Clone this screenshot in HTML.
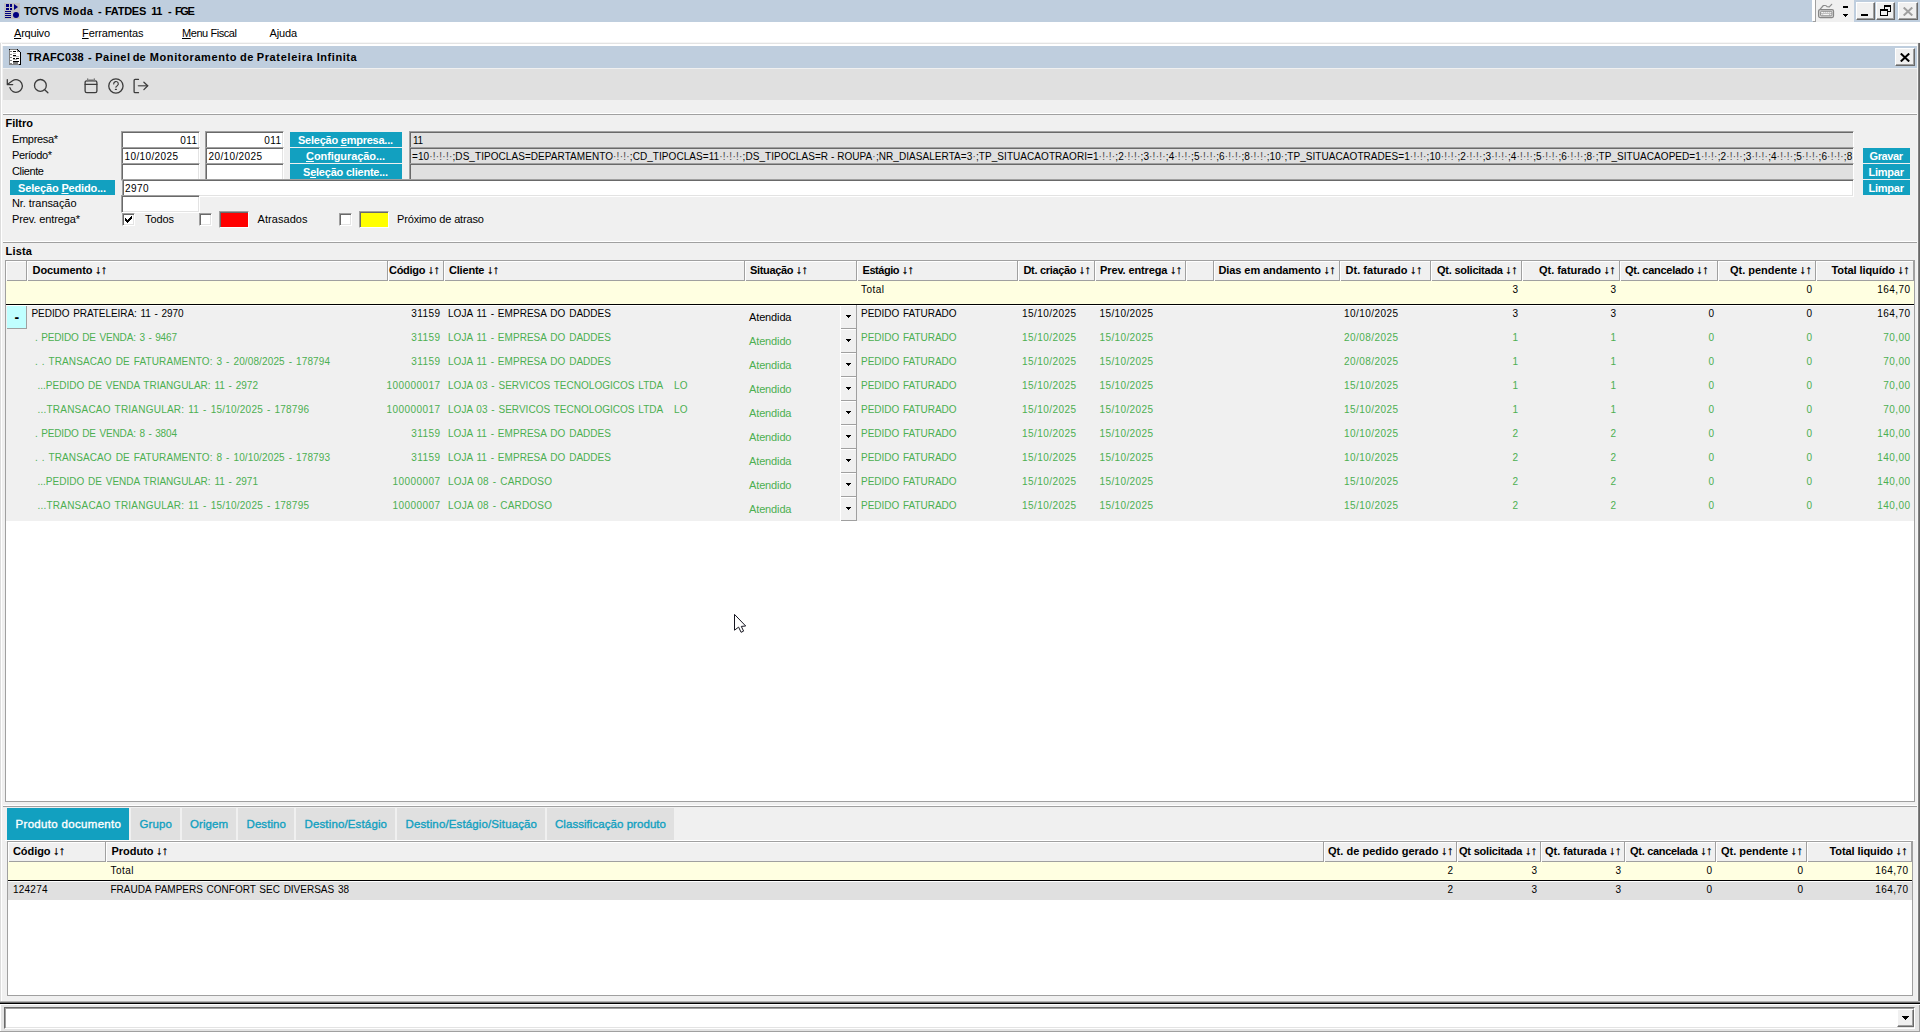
<!DOCTYPE html><html lang="pt-BR"><head><meta charset="utf-8"><title>TOTVS Moda - FATDES 11 - FGE</title><style>html,body{margin:0;padding:0}body{width:1920px;height:1032px;position:relative;overflow:hidden;background:#f0f0f0}
body>div,body>svg{position:absolute}
.t{white-space:nowrap;font:11px/13px 'Liberation Sans',sans-serif;color:#000}
.t.b{font-weight:bold}
.t.tab{font-size:11.5px;line-height:14px;-webkit-text-stroke:0.35px currentColor}
.t.d{font-size:10px}
.ar{font:12px/13px 'Liberation Sans',sans-serif;letter-spacing:-0.2px;margin-left:2.6px;font-weight:normal;-webkit-text-stroke:0.3px currentColor}
.sp{color:#4a4a4a}
u{text-decoration:underline}
</style></head><body><div style="left:0px;top:0px;width:1920px;height:22px;background:#bfcede;"></div>
<svg style="left:4px;top:3px" width="16" height="16" viewBox="0 0 16 16" shape-rendering="crispEdges"><rect width="16" height="16" fill="#c0c0c0"/><g fill="#000080"><rect x="2" y="1" width="3" height="3"/><rect x="6" y="1" width="2" height="3"/><rect x="2" y="5" width="3" height="2"/><rect x="6" y="5" width="2" height="2"/><rect x="1" y="8" width="6" height="1"/><rect x="1" y="10" width="6" height="1"/><rect x="1" y="12" width="6" height="1"/><rect x="1" y="14" width="6" height="1"/><path d="M10 1 L14 4 L10 7 Z" shape-rendering="auto"/><circle cx="12" cy="12" r="3" shape-rendering="auto"/></g></svg>
<div style="left:1816px;top:0px;width:38px;height:22px;background:#f0f0f0;"></div>
<div style="left:1812px;top:0px;width:3px;height:21px;background:#fff;"></div>
<div style="left:1815px;top:0px;width:1px;height:22px;background:#a0a0a0;"></div>
<div style="left:1813px;top:21px;width:2px;height:1px;background:#a0a0a0;"></div>
<svg style="left:1817px;top:3px" width="18" height="16" viewBox="0 0 18 16" fill="none"><rect x="1.6" y="6.6" width="14.9" height="7.9" rx="1.5" stroke="#868686" stroke-width="1.25" fill="#dcdcdc"/><rect x="3.6" y="8.3" width="11.2" height="4.6" rx="0.8" stroke="#909090" fill="#c0c0c0"/><g fill="#f6f6f6"><rect x="4.3" y="8.9" width="2" height="1.1"/><rect x="7.2" y="8.9" width="1.1" height="1.1"/><rect x="9.2" y="8.9" width="1.1" height="1.1"/><rect x="11.2" y="8.9" width="1.1" height="1.1"/><rect x="13.2" y="8.9" width="1.1" height="1.1"/><rect x="4.3" y="11" width="1.1" height="1.1"/><rect x="6.2" y="11" width="5.8" height="1.1"/><rect x="13.2" y="11" width="1.1" height="1.1"/></g><path d="M3.2 6.2L6.4 2.5H8.2Q9.6 2.7 10.1 3.7L12.3 3.9L14.7 1.3" stroke="#8c8c8c" stroke-width="1.2" stroke-linejoin="round" stroke-linecap="round"/></svg>
<div style="left:1843px;top:6px;width:5px;height:2px;background:#000;"></div>
<svg style="left:1843px;top:14px" width="5" height="3" viewBox="0 0 5 3" shape-rendering="crispEdges"><path d="M0 0h5v1h-1v1h-1v1h-1v-1h-1v-1h-1z" fill="#000"/></svg>
<div style="left:1856px;top:2px;width:19px;height:18px;background:#f0f0f0;box-sizing:border-box;border-top:1px solid #fff;border-left:1px solid #fff;border-right:1px solid #696969;border-bottom:1px solid #696969;box-shadow:inset -1px -1px 0 #a0a0a0;"></div>
<div style="left:1861px;top:14px;width:7px;height:2px;background:#000;"></div>
<div style="left:1876px;top:2px;width:19px;height:18px;background:#f0f0f0;box-sizing:border-box;border-top:1px solid #fff;border-left:1px solid #fff;border-right:1px solid #696969;border-bottom:1px solid #696969;box-shadow:inset -1px -1px 0 #a0a0a0;"></div>
<svg style="left:1880px;top:5px" width="12" height="11" viewBox="0 0 12 11" shape-rendering="crispEdges" fill="none" stroke="#000"><path d="M4.5 4V1.5h6v4.5H8" /><path d="M4 1h7" stroke-width="2"/><rect x="0.5" y="4.5" width="7" height="6" fill="#f0f0f0"/><path d="M0 5h8" stroke-width="2"/></svg>
<div style="left:1898px;top:2px;width:20px;height:18px;background:#f0f0f0;box-sizing:border-box;border-top:1px solid #fff;border-left:1px solid #fff;border-right:1px solid #696969;border-bottom:1px solid #696969;box-shadow:inset -1px -1px 0 #a0a0a0;"></div>
<svg style="left:1903px;top:7px" width="10" height="9" viewBox="0 0 10 9"><path d="M0.7 0.5L9.3 8.5M9.3 0.5L0.7 8.5" stroke="#a0a0a0" stroke-width="2" fill="none"/></svg>
<div style="left:0px;top:22px;width:1920px;height:21px;background:#fff;"></div>
<div style="left:0px;top:42px;width:1920px;height:1px;background:#f6f6f6;"></div>
<div style="left:0px;top:43px;width:1920px;height:1px;background:#e3e3e3;"></div>
<div style="left:0px;top:44px;width:1920px;height:2px;background:#fff;"></div>
<div style="left:0px;top:43px;width:1px;height:958px;background:#dcdcdc;"></div>
<div style="left:1px;top:43px;width:1px;height:958px;background:#fff;"></div>
<div style="left:1917px;top:44px;width:1px;height:957px;background:#f6f6f6;"></div>
<div style="left:1918px;top:43px;width:1px;height:959px;background:#808080;"></div>
<div style="left:1919px;top:43px;width:1px;height:959px;background:#696969;"></div>
<div style="left:3px;top:46px;width:1914px;height:22px;background:#bfcede;"></div>
<svg style="left:9px;top:49px" width="12" height="16" viewBox="0 0 12 16" shape-rendering="crispEdges"><path d="M1 1h8l2 2v12h-10z" fill="#fff"/><rect x="0" y="0" width="1" height="16" fill="#808080"/><rect x="0" y="0" width="9" height="1" fill="#808080"/><rect x="0" y="15" width="10" height="1" fill="#808080"/><g fill="#000"><rect x="0" y="0" width="1" height="1"/><rect x="8" y="0" width="1" height="1"/><rect x="9" y="1" width="1" height="1"/><rect x="10" y="2" width="1" height="1"/><rect x="11" y="3" width="1" height="13"/><rect x="10" y="15" width="1" height="1"/><rect x="4" y="2" width="3" height="1"/><rect x="4" y="6" width="3" height="1"/><rect x="4" y="9" width="2" height="1"/><rect x="7" y="9" width="3" height="1"/><rect x="4" y="12" width="6" height="1"/></g><g fill="#808080"><rect x="8" y="2" width="2" height="1"/><rect x="8" y="1" width="1" height="1"/><rect x="1" y="2" width="2" height="1"/><rect x="1" y="5" width="2" height="1"/><rect x="1" y="8" width="2" height="1"/><rect x="1" y="11" width="2" height="1"/><rect x="1" y="14" width="2" height="1"/><rect x="4" y="13" width="5" height="2"/></g><g fill="#b4b4b4"><rect x="4" y="4" width="3" height="1"/><rect x="4" y="7" width="6" height="1"/><rect x="4" y="10" width="4" height="1"/></g></svg>
<div style="left:1895px;top:48px;width:20px;height:18px;background:#f0f0f0;box-sizing:border-box;border-top:1px solid #fff;border-left:1px solid #fff;border-right:1px solid #696969;border-bottom:1px solid #696969;box-shadow:inset -1px -1px 0 #a0a0a0;"></div>
<svg style="left:1899.5px;top:53px" width="10" height="9" viewBox="0 0 10 9"><path d="M0.8 0.5L9.2 8.5M9.2 0.5L0.8 8.5" stroke="#000" stroke-width="2" fill="none"/></svg>
<div style="left:3px;top:68px;width:1914px;height:1px;background:#f0f0f0;"></div>
<div style="left:3px;top:69px;width:1914px;height:31px;background:#e0e0e0;"></div>
<svg style="left:4px;top:74px" width="150" height="24" viewBox="0 0 150 24" fill="none" stroke="#3c3c3c" stroke-width="1.3" stroke-linecap="round" stroke-linejoin="round">
<path d="M3.3 5.6V10.6H8.7M3.3 10.6L8.5 6.8A6.3 6.3 0 1 1 5.9 13.6"/>
<circle cx="36.4" cy="11.4" r="5.9"/><path d="M40.7 15.8L43.9 18.7"/>
<rect x="81.1" y="6.8" width="11.8" height="11.9" rx="1.7"/><path d="M81.2 10.4h11.6"/><path d="M83.7 5.1v2M90.3 5.1v2" stroke="#7a7a7a" stroke-width="1.5"/><path d="M84.6 5.6h4.8" stroke="#9a9a9a" stroke-width="0.9"/>
<circle cx="111.9" cy="11.95" r="7.15"/><path d="M109.7 10A2.3 2.3 0 1 1 113.3 11.7Q111.9 12.5 111.9 13.2" stroke-width="1.15"/><path d="M111.4 15.4h1" stroke-width="1.15"/>
<path d="M134.5 5.4h-3.4a1 1 0 0 0 -1 1v11.3a1 1 0 0 0 1 1h3.4"/><path d="M134.5 11.8H143.5" stroke="#666" stroke-width="1.6"/><path d="M139.9 8.3L143.7 11.8L139.9 15.6"/>
</svg>
<div style="left:3px;top:113px;width:1914px;height:1px;background:#fff;"></div>
<div style="left:3px;top:114px;width:1914px;height:1px;background:#a0a0a0;"></div>
<div style="left:121px;top:131px;width:79px;height:18px;background:#fff;box-sizing:border-box;border-top:1px solid #a0a0a0;border-left:1px solid #a0a0a0;border-right:1px solid #fff;border-bottom:1px solid #fff;box-shadow:inset 1px 1px 0 #696969,inset -1px -1px 0 #e3e3e3;"></div>
<div style="left:205px;top:131px;width:79px;height:18px;background:#fff;box-sizing:border-box;border-top:1px solid #a0a0a0;border-left:1px solid #a0a0a0;border-right:1px solid #fff;border-bottom:1px solid #fff;box-shadow:inset 1px 1px 0 #696969,inset -1px -1px 0 #e3e3e3;"></div>
<div style="left:290px;top:132px;width:112px;height:15px;background:#12a0c0;"></div>
<div style="left:409px;top:131px;width:1445px;height:18px;background:#e0e0e0;box-sizing:border-box;border-top:1px solid #a0a0a0;border-left:1px solid #a0a0a0;border-right:1px solid #fff;border-bottom:1px solid #fff;box-shadow:inset 1px 1px 0 #696969,inset -1px -1px 0 #e0e0e0;"></div>
<div style="left:121px;top:147px;width:79px;height:18px;background:#fff;box-sizing:border-box;border-top:1px solid #a0a0a0;border-left:1px solid #a0a0a0;border-right:1px solid #fff;border-bottom:1px solid #fff;box-shadow:inset 1px 1px 0 #696969,inset -1px -1px 0 #e3e3e3;"></div>
<div style="left:205px;top:147px;width:79px;height:18px;background:#fff;box-sizing:border-box;border-top:1px solid #a0a0a0;border-left:1px solid #a0a0a0;border-right:1px solid #fff;border-bottom:1px solid #fff;box-shadow:inset 1px 1px 0 #696969,inset -1px -1px 0 #e3e3e3;"></div>
<div style="left:290px;top:148px;width:112px;height:15px;background:#12a0c0;"></div>
<div style="left:409px;top:147px;width:1445px;height:18px;background:#e0e0e0;box-sizing:border-box;border-top:1px solid #a0a0a0;border-left:1px solid #a0a0a0;border-right:1px solid #fff;border-bottom:1px solid #fff;box-shadow:inset 1px 1px 0 #696969,inset -1px -1px 0 #e0e0e0;"></div>
<div style="left:121px;top:163px;width:79px;height:18px;background:#fff;box-sizing:border-box;border-top:1px solid #a0a0a0;border-left:1px solid #a0a0a0;border-right:1px solid #fff;border-bottom:1px solid #fff;box-shadow:inset 1px 1px 0 #696969,inset -1px -1px 0 #e3e3e3;"></div>
<div style="left:205px;top:163px;width:79px;height:18px;background:#fff;box-sizing:border-box;border-top:1px solid #a0a0a0;border-left:1px solid #a0a0a0;border-right:1px solid #fff;border-bottom:1px solid #fff;box-shadow:inset 1px 1px 0 #696969,inset -1px -1px 0 #e3e3e3;"></div>
<div style="left:290px;top:164px;width:112px;height:15px;background:#12a0c0;"></div>
<div style="left:409px;top:163px;width:1445px;height:18px;background:#e0e0e0;box-sizing:border-box;border-top:1px solid #a0a0a0;border-left:1px solid #a0a0a0;border-right:1px solid #fff;border-bottom:1px solid #fff;box-shadow:inset 1px 1px 0 #696969,inset -1px -1px 0 #e0e0e0;"></div>
<div style="left:122px;top:179px;width:1732px;height:18px;background:#fff;box-sizing:border-box;border-top:1px solid #a0a0a0;border-left:1px solid #a0a0a0;border-right:1px solid #fff;border-bottom:1px solid #fff;box-shadow:inset 1px 1px 0 #696969,inset -1px -1px 0 #e3e3e3;"></div>
<div style="left:121px;top:195px;width:79px;height:18px;background:#fff;box-sizing:border-box;border-top:1px solid #a0a0a0;border-left:1px solid #a0a0a0;border-right:1px solid #fff;border-bottom:1px solid #fff;box-shadow:inset 1px 1px 0 #696969,inset -1px -1px 0 #e3e3e3;"></div>
<div style="left:10px;top:180px;width:105px;height:15px;background:#12a0c0;"></div>
<div style="left:1863px;top:148px;width:47px;height:15px;background:#12a0c0;"></div>
<div style="left:1863px;top:164px;width:47px;height:15px;background:#12a0c0;"></div>
<div style="left:1863px;top:180px;width:47px;height:15px;background:#12a0c0;"></div>
<div class="t d" id="cfg" style="left:412px;top:150px;letter-spacing:0.06px">=10<span class="sp" style="letter-spacing:0.243px">·!·!·!·</span>;DS_TIPOCLAS=DEPARTAMENTO<span class="sp" style="letter-spacing:0.243px">·!·!·</span>;CD_TIPOCLAS=11<span class="sp" style="letter-spacing:0.243px">·!·!·!·</span>;DS_TIPOCLAS=R - ROUPA<span class="sp" style="letter-spacing:0.243px">·</span>;NR_DIASALERTA=3<span class="sp" style="letter-spacing:0.243px">·</span>;TP_SITUACAOTRAORI=1<span class="sp" style="letter-spacing:0.243px">·!·!·</span>;2<span class="sp" style="letter-spacing:0.243px">·!·!·</span>;3<span class="sp" style="letter-spacing:0.243px">·!·!·</span>;4<span class="sp" style="letter-spacing:0.243px">·!·!·</span>;5<span class="sp" style="letter-spacing:0.243px">·!·!·</span>;6<span class="sp" style="letter-spacing:0.243px">·!·!·</span>;8<span class="sp" style="letter-spacing:0.243px">·!·!·</span>;10<span class="sp" style="letter-spacing:0.243px">·</span>;TP_SITUACAOTRADES=1<span class="sp" style="letter-spacing:0.243px">·!·!·</span>;10<span class="sp" style="letter-spacing:0.243px">·!·!·</span>;2<span class="sp" style="letter-spacing:0.243px">·!·!·</span>;3<span class="sp" style="letter-spacing:0.243px">·!·!·</span>;4<span class="sp" style="letter-spacing:0.243px">·!·!·</span>;5<span class="sp" style="letter-spacing:0.243px">·!·!·</span>;6<span class="sp" style="letter-spacing:0.243px">·!·!·</span>;8<span class="sp" style="letter-spacing:0.243px">·</span>;TP_SITUACAOPED=1<span class="sp" style="letter-spacing:0.243px">·!·!·</span>;2<span class="sp" style="letter-spacing:0.243px">·!·!·</span>;3<span class="sp" style="letter-spacing:0.243px">·!·!·</span>;4<span class="sp" style="letter-spacing:0.243px">·!·!·</span>;5<span class="sp" style="letter-spacing:0.243px">·!·!·</span>;6<span class="sp" style="letter-spacing:0.243px">·!·!·</span>;8</div>
<div style="left:122px;top:213px;width:13px;height:13px;background:#fff;box-sizing:border-box;border-top:1px solid #a0a0a0;border-left:1px solid #a0a0a0;border-right:1px solid #fff;border-bottom:1px solid #fff;box-shadow:inset 1px 1px 0 #696969,inset -1px -1px 0 #e3e3e3;"></div>
<svg style="left:125px;top:216px" width="7" height="7" viewBox="0 0 7 7" shape-rendering="crispEdges" fill="#000"><rect x="0" y="2" width="1" height="3"/><rect x="1" y="3" width="1" height="3"/><rect x="2" y="4" width="1" height="3"/><rect x="3" y="3" width="1" height="3"/><rect x="4" y="2" width="1" height="3"/><rect x="5" y="1" width="1" height="3"/><rect x="6" y="0" width="1" height="3"/></svg>
<div style="left:199px;top:213px;width:13px;height:13px;background:#fff;box-sizing:border-box;border-top:1px solid #a0a0a0;border-left:1px solid #a0a0a0;border-right:1px solid #fff;border-bottom:1px solid #fff;box-shadow:inset 1px 1px 0 #696969,inset -1px -1px 0 #e3e3e3;"></div>
<div style="left:339px;top:213px;width:13px;height:13px;background:#fff;box-sizing:border-box;border-top:1px solid #a0a0a0;border-left:1px solid #a0a0a0;border-right:1px solid #fff;border-bottom:1px solid #fff;box-shadow:inset 1px 1px 0 #696969,inset -1px -1px 0 #e3e3e3;"></div>
<div style="left:219px;top:211px;width:30px;height:17px;background:#ff0000;box-sizing:border-box;border-top:1px solid #a0a0a0;border-left:1px solid #a0a0a0;border-right:1px solid #fff;border-bottom:1px solid #fff;box-shadow:inset 1px 1px 0 #696969,inset -1px -1px 0 #ff0000;"></div>
<div style="left:359px;top:211px;width:30px;height:17px;background:#ffff00;box-sizing:border-box;border-top:1px solid #a0a0a0;border-left:1px solid #a0a0a0;border-right:1px solid #fff;border-bottom:1px solid #fff;box-shadow:inset 1px 1px 0 #696969,inset -1px -1px 0 #ffff00;"></div>
<div style="left:3px;top:241px;width:1914px;height:1px;background:#fff;"></div>
<div style="left:3px;top:242px;width:1914px;height:1px;background:#a0a0a0;"></div>
<div style="left:5px;top:260px;width:1910px;height:542px;background:#fff;box-sizing:border-box;border:1px solid #a0a0a0;"></div>
<div style="left:6px;top:261px;width:21px;height:20px;background:#f0f0f0;box-sizing:border-box;border-left:1px solid #fff;border-right:1px solid #a0a0a0;box-shadow:inset 0 1px 0 #fff,inset 0 -1px 0 #a0a0a0;"></div>
<div style="left:27px;top:261px;width:361px;height:20px;background:#f0f0f0;box-sizing:border-box;border-left:1px solid #fff;border-right:1px solid #a0a0a0;box-shadow:inset 0 1px 0 #fff,inset 0 -1px 0 #a0a0a0;"></div>
<div style="left:388px;top:261px;width:56px;height:20px;background:#f0f0f0;box-sizing:border-box;border-left:1px solid #fff;border-right:1px solid #a0a0a0;box-shadow:inset 0 1px 0 #fff,inset 0 -1px 0 #a0a0a0;"></div>
<div style="left:444px;top:261px;width:301px;height:20px;background:#f0f0f0;box-sizing:border-box;border-left:1px solid #fff;border-right:1px solid #a0a0a0;box-shadow:inset 0 1px 0 #fff,inset 0 -1px 0 #a0a0a0;"></div>
<div style="left:745px;top:261px;width:112px;height:20px;background:#f0f0f0;box-sizing:border-box;border-left:1px solid #fff;border-right:1px solid #a0a0a0;box-shadow:inset 0 1px 0 #fff,inset 0 -1px 0 #a0a0a0;"></div>
<div style="left:857px;top:261px;width:161px;height:20px;background:#f0f0f0;box-sizing:border-box;border-left:1px solid #fff;border-right:1px solid #a0a0a0;box-shadow:inset 0 1px 0 #fff,inset 0 -1px 0 #a0a0a0;"></div>
<div style="left:1018px;top:261px;width:77px;height:20px;background:#f0f0f0;box-sizing:border-box;border-left:1px solid #fff;border-right:1px solid #a0a0a0;box-shadow:inset 0 1px 0 #fff,inset 0 -1px 0 #a0a0a0;"></div>
<div style="left:1095px;top:261px;width:91px;height:20px;background:#f0f0f0;box-sizing:border-box;border-left:1px solid #fff;border-right:1px solid #a0a0a0;box-shadow:inset 0 1px 0 #fff,inset 0 -1px 0 #a0a0a0;"></div>
<div style="left:1186px;top:261px;width:28px;height:20px;background:#f0f0f0;box-sizing:border-box;border-left:1px solid #fff;border-right:1px solid #a0a0a0;box-shadow:inset 0 1px 0 #fff,inset 0 -1px 0 #a0a0a0;"></div>
<div style="left:1214px;top:261px;width:126px;height:20px;background:#f0f0f0;box-sizing:border-box;border-left:1px solid #fff;border-right:1px solid #a0a0a0;box-shadow:inset 0 1px 0 #fff,inset 0 -1px 0 #a0a0a0;"></div>
<div style="left:1340px;top:261px;width:91px;height:20px;background:#f0f0f0;box-sizing:border-box;border-left:1px solid #fff;border-right:1px solid #a0a0a0;box-shadow:inset 0 1px 0 #fff,inset 0 -1px 0 #a0a0a0;"></div>
<div style="left:1431px;top:261px;width:91px;height:20px;background:#f0f0f0;box-sizing:border-box;border-left:1px solid #fff;border-right:1px solid #a0a0a0;box-shadow:inset 0 1px 0 #fff,inset 0 -1px 0 #a0a0a0;"></div>
<div style="left:1522px;top:261px;width:98px;height:20px;background:#f0f0f0;box-sizing:border-box;border-left:1px solid #fff;border-right:1px solid #a0a0a0;box-shadow:inset 0 1px 0 #fff,inset 0 -1px 0 #a0a0a0;"></div>
<div style="left:1620px;top:261px;width:98px;height:20px;background:#f0f0f0;box-sizing:border-box;border-left:1px solid #fff;border-right:1px solid #a0a0a0;box-shadow:inset 0 1px 0 #fff,inset 0 -1px 0 #a0a0a0;"></div>
<div style="left:1718px;top:261px;width:98px;height:20px;background:#f0f0f0;box-sizing:border-box;border-left:1px solid #fff;border-right:1px solid #a0a0a0;box-shadow:inset 0 1px 0 #fff,inset 0 -1px 0 #a0a0a0;"></div>
<div style="left:1816px;top:261px;width:98px;height:20px;background:#f0f0f0;box-sizing:border-box;border-left:1px solid #fff;border-right:1px solid #a0a0a0;box-shadow:inset 0 1px 0 #fff,inset 0 -1px 0 #a0a0a0;"></div>
<div style="left:6px;top:281px;width:1908px;height:23px;background:#ffffe1;"></div>
<div style="left:6px;top:304px;width:1908px;height:1px;background:#000;"></div>
<div style="left:6px;top:305px;width:1908px;height:216px;background:#f0f0f0;"></div>
<div style="left:6px;top:305px;width:1908px;height:1px;background:#fff;"></div>
<div style="left:7px;top:306px;width:20px;height:23px;background:#c0ffff;box-sizing:border-box;border-right:1px solid #a0a0a0;border-bottom:1px solid #a0a0a0;"></div>
<div class="t b" style="left:14.6px;top:309px;font-size:14px;line-height:16px">-</div>
<div style="left:840px;top:305px;width:17px;height:24px;background:#f0f0f0;box-sizing:border-box;border-left:1px solid #fff;border-right:1px solid #a0a0a0;box-shadow:inset 0 1px 0 #fff,inset 0 -1px 0 #a0a0a0;"></div>
<svg style="left:846px;top:315px" width="5" height="3" viewBox="0 0 5 3" shape-rendering="crispEdges"><path d="M0 0h5v1h-1v1h-1v1h-1v-1h-1v-1h-1z" fill="#000"/></svg>
<div style="left:840px;top:329px;width:17px;height:24px;background:#f0f0f0;box-sizing:border-box;border-left:1px solid #fff;border-right:1px solid #a0a0a0;box-shadow:inset 0 1px 0 #fff,inset 0 -1px 0 #a0a0a0;"></div>
<svg style="left:846px;top:339px" width="5" height="3" viewBox="0 0 5 3" shape-rendering="crispEdges"><path d="M0 0h5v1h-1v1h-1v1h-1v-1h-1v-1h-1z" fill="#000"/></svg>
<div style="left:840px;top:353px;width:17px;height:24px;background:#f0f0f0;box-sizing:border-box;border-left:1px solid #fff;border-right:1px solid #a0a0a0;box-shadow:inset 0 1px 0 #fff,inset 0 -1px 0 #a0a0a0;"></div>
<svg style="left:846px;top:363px" width="5" height="3" viewBox="0 0 5 3" shape-rendering="crispEdges"><path d="M0 0h5v1h-1v1h-1v1h-1v-1h-1v-1h-1z" fill="#000"/></svg>
<div style="left:840px;top:377px;width:17px;height:24px;background:#f0f0f0;box-sizing:border-box;border-left:1px solid #fff;border-right:1px solid #a0a0a0;box-shadow:inset 0 1px 0 #fff,inset 0 -1px 0 #a0a0a0;"></div>
<svg style="left:846px;top:387px" width="5" height="3" viewBox="0 0 5 3" shape-rendering="crispEdges"><path d="M0 0h5v1h-1v1h-1v1h-1v-1h-1v-1h-1z" fill="#000"/></svg>
<div style="left:840px;top:401px;width:17px;height:24px;background:#f0f0f0;box-sizing:border-box;border-left:1px solid #fff;border-right:1px solid #a0a0a0;box-shadow:inset 0 1px 0 #fff,inset 0 -1px 0 #a0a0a0;"></div>
<svg style="left:846px;top:411px" width="5" height="3" viewBox="0 0 5 3" shape-rendering="crispEdges"><path d="M0 0h5v1h-1v1h-1v1h-1v-1h-1v-1h-1z" fill="#000"/></svg>
<div style="left:840px;top:425px;width:17px;height:24px;background:#f0f0f0;box-sizing:border-box;border-left:1px solid #fff;border-right:1px solid #a0a0a0;box-shadow:inset 0 1px 0 #fff,inset 0 -1px 0 #a0a0a0;"></div>
<svg style="left:846px;top:435px" width="5" height="3" viewBox="0 0 5 3" shape-rendering="crispEdges"><path d="M0 0h5v1h-1v1h-1v1h-1v-1h-1v-1h-1z" fill="#000"/></svg>
<div style="left:840px;top:449px;width:17px;height:24px;background:#f0f0f0;box-sizing:border-box;border-left:1px solid #fff;border-right:1px solid #a0a0a0;box-shadow:inset 0 1px 0 #fff,inset 0 -1px 0 #a0a0a0;"></div>
<svg style="left:846px;top:459px" width="5" height="3" viewBox="0 0 5 3" shape-rendering="crispEdges"><path d="M0 0h5v1h-1v1h-1v1h-1v-1h-1v-1h-1z" fill="#000"/></svg>
<div style="left:840px;top:473px;width:17px;height:24px;background:#f0f0f0;box-sizing:border-box;border-left:1px solid #fff;border-right:1px solid #a0a0a0;box-shadow:inset 0 1px 0 #fff,inset 0 -1px 0 #a0a0a0;"></div>
<svg style="left:846px;top:483px" width="5" height="3" viewBox="0 0 5 3" shape-rendering="crispEdges"><path d="M0 0h5v1h-1v1h-1v1h-1v-1h-1v-1h-1z" fill="#000"/></svg>
<div style="left:840px;top:497px;width:17px;height:24px;background:#f0f0f0;box-sizing:border-box;border-left:1px solid #fff;border-right:1px solid #a0a0a0;box-shadow:inset 0 1px 0 #fff,inset 0 -1px 0 #a0a0a0;"></div>
<svg style="left:846px;top:507px" width="5" height="3" viewBox="0 0 5 3" shape-rendering="crispEdges"><path d="M0 0h5v1h-1v1h-1v1h-1v-1h-1v-1h-1z" fill="#000"/></svg>
<svg style="left:730px;top:610px" width="20" height="26" viewBox="0 0 20 26"><path d="M4.5 4.4V20.2L8.6 17.1L11.1 22.3L13.6 21.1L11.3 16.4L15.7 16Z" fill="#fff" stroke="#15151f" stroke-width="1" stroke-linejoin="round"/></svg>
<div style="left:3px;top:805px;width:1914px;height:1px;background:#fff;"></div>
<div style="left:3px;top:806px;width:1914px;height:1px;background:#a0a0a0;"></div>
<div style="left:7px;top:808px;width:122px;height:32px;background:#12a0c0;"></div>
<div style="left:131px;top:808px;width:49px;height:32px;background:#e0e0e0;"></div>
<div style="left:182px;top:808px;width:54px;height:32px;background:#e0e0e0;"></div>
<div style="left:238px;top:808px;width:56px;height:32px;background:#e0e0e0;"></div>
<div style="left:296px;top:808px;width:99px;height:32px;background:#e0e0e0;"></div>
<div style="left:397px;top:808px;width:148px;height:32px;background:#e0e0e0;"></div>
<div style="left:547px;top:808px;width:127px;height:32px;background:#e0e0e0;"></div>
<div style="left:5px;top:840px;width:1910px;height:1px;background:#fff;"></div>
<div style="left:7px;top:841px;width:1906px;height:155px;background:#fff;box-sizing:border-box;border:1px solid #a0a0a0;"></div>
<div style="left:8px;top:842px;width:98px;height:20px;background:#f0f0f0;box-sizing:border-box;border-left:1px solid #fff;border-right:1px solid #a0a0a0;box-shadow:inset 0 1px 0 #fff,inset 0 -1px 0 #a0a0a0;"></div>
<div style="left:106px;top:842px;width:1218px;height:20px;background:#f0f0f0;box-sizing:border-box;border-left:1px solid #fff;border-right:1px solid #a0a0a0;box-shadow:inset 0 1px 0 #fff,inset 0 -1px 0 #a0a0a0;"></div>
<div style="left:1324px;top:842px;width:133px;height:20px;background:#f0f0f0;box-sizing:border-box;border-left:1px solid #fff;border-right:1px solid #a0a0a0;box-shadow:inset 0 1px 0 #fff,inset 0 -1px 0 #a0a0a0;"></div>
<div style="left:1457px;top:842px;width:84px;height:20px;background:#f0f0f0;box-sizing:border-box;border-left:1px solid #fff;border-right:1px solid #a0a0a0;box-shadow:inset 0 1px 0 #fff,inset 0 -1px 0 #a0a0a0;"></div>
<div style="left:1541px;top:842px;width:84px;height:20px;background:#f0f0f0;box-sizing:border-box;border-left:1px solid #fff;border-right:1px solid #a0a0a0;box-shadow:inset 0 1px 0 #fff,inset 0 -1px 0 #a0a0a0;"></div>
<div style="left:1625px;top:842px;width:91px;height:20px;background:#f0f0f0;box-sizing:border-box;border-left:1px solid #fff;border-right:1px solid #a0a0a0;box-shadow:inset 0 1px 0 #fff,inset 0 -1px 0 #a0a0a0;"></div>
<div style="left:1716px;top:842px;width:91px;height:20px;background:#f0f0f0;box-sizing:border-box;border-left:1px solid #fff;border-right:1px solid #a0a0a0;box-shadow:inset 0 1px 0 #fff,inset 0 -1px 0 #a0a0a0;"></div>
<div style="left:1807px;top:842px;width:105px;height:20px;background:#f0f0f0;box-sizing:border-box;border-left:1px solid #fff;border-right:1px solid #a0a0a0;box-shadow:inset 0 1px 0 #fff,inset 0 -1px 0 #a0a0a0;"></div>
<div style="left:8px;top:862px;width:1904px;height:18px;background:#ffffe1;"></div>
<div style="left:8px;top:880px;width:1904px;height:1px;background:#000;"></div>
<div style="left:8px;top:881px;width:1904px;height:19px;background:#e0e0e0;"></div>
<div style="left:8px;top:881px;width:1904px;height:1px;background:#fff;"></div>
<div style="left:0px;top:1001px;width:1920px;height:1px;background:#b4b4b4;"></div>
<div style="left:0px;top:1002px;width:1920px;height:1px;background:#696969;"></div>
<div style="left:0px;top:1003px;width:1920px;height:1px;background:#000;"></div>
<div style="left:0px;top:1004px;width:1920px;height:28px;background:#f0f0f0;"></div>
<div style="left:0px;top:1004px;width:1920px;height:1px;background:#fff;"></div>
<div style="left:0px;top:1004px;width:1px;height:27px;background:#fff;"></div>
<div style="left:1px;top:1005px;width:1918px;height:26px;background:#e3e3e3;"></div>
<div style="left:1919px;top:1005px;width:1px;height:26px;background:#a0a0a0;"></div>
<div style="left:4px;top:1007px;width:1911px;height:22px;background:#fff;box-sizing:border-box;border-top:1px solid #696969;border-left:1px solid #696969;border-right:1px solid #fff;border-bottom:1px solid #fff;box-shadow:inset 1px 1px 0 #a0a0a0, inset -1px -1px 0 #e3e3e3;"></div>
<div style="left:1897px;top:1009px;width:17px;height:18px;background:#f0f0f0;box-sizing:border-box;border-left:1px solid #fff;border-top:1px solid #fff;border-right:1px solid #696969;border-bottom:1px solid #696969;box-shadow:inset -1px -1px 0 #a0a0a0;"></div>
<svg style="left:1902px;top:1016px" width="7" height="4" viewBox="0 0 7 4" shape-rendering="crispEdges"><path d="M0 0h7v1h-1v1h-1v1h-1v1h-1v-1h-1v-1h-1v-1h-1z" fill="#000"/></svg>
<div style="left:0px;top:1031px;width:1920px;height:1px;background:#a0a0a0;"></div>
<div class="t b" style="letter-spacing:-0.434px;left:24px;top:5px;">TOTVS</div>
<div class="t b" style="letter-spacing:0.422px;left:63px;top:5px;">Moda</div>
<div class="t b" style="letter-spacing:-0.672px;left:98px;top:5px;">-</div>
<div class="t b" style="letter-spacing:-0.266px;left:105px;top:5px;">FATDES</div>
<div class="t b" style="letter-spacing:-0.391px;left:151.25px;top:5px;">11</div>
<div class="t b" style="letter-spacing:-0.672px;left:168px;top:5px;">-</div>
<div class="t b" style="letter-spacing:-1.438px;left:175px;top:5px;">FGE</div>
<div class="t" style="letter-spacing:-0.216px;left:14px;top:27px;"><u>A</u>rquivo</div>
<div class="t" style="letter-spacing:-0.086px;left:82px;top:27px;"><u>F</u>erramentas</div>
<div class="t" style="letter-spacing:-0.43px;left:182px;top:27px;"><u>M</u>enu Fiscal</div>
<div class="t" style="letter-spacing:-0.16px;left:269.5px;top:27px;">A<u>j</u>uda</div>
<div class="t b" style="letter-spacing:0.125px;left:27px;top:51px;">TRAFC038</div>
<div class="t b" style="letter-spacing:-0.672px;left:88px;top:51px;">-</div>
<div class="t b" style="letter-spacing:0.469px;left:95.25px;top:51px;">Painel</div>
<div class="t b" style="letter-spacing:0.006px;left:132.75px;top:51px;">de</div>
<div class="t b" style="letter-spacing:0.616px;left:149.75px;top:51px;">Monitoramento</div>
<div class="t b" style="letter-spacing:0.456px;left:240px;top:51px;">de</div>
<div class="t b" style="letter-spacing:0.649px;left:256.7px;top:51px;">Prateleira</div>
<div class="t b" style="letter-spacing:0.562px;left:316.7px;top:51px;">Infinita</div>
<div class="t b" style="left:5.5px;top:117px;">Filtro</div>
<div class="t" style="letter-spacing:-0.328px;left:12px;top:133px;">Empresa*</div>
<div class="t" style="letter-spacing:-0.402px;left:12px;top:149px;">Período*</div>
<div class="t" style="letter-spacing:-0.375px;left:12px;top:165px;">Cliente</div>
<div class="t" style="letter-spacing:-0.077px;left:12px;top:197px;">Nr. transação</div>
<div class="t" style="letter-spacing:-0.117px;left:12px;top:213px;">Prev. entrega*</div>
<div class="t b" style="color:#fff;letter-spacing:-0.155px;left:18px;top:182px;">Seleção <u>P</u>edido...</div>
<div class="t b" style="color:#fff;letter-spacing:-0.239px;left:298px;top:134px;">Seleção <u>e</u>mpresa...</div>
<div class="t b" style="color:#fff;letter-spacing:-0.076px;left:306px;top:150px;"><u>C</u>onfiguração...</div>
<div class="t b" style="color:#fff;letter-spacing:-0.215px;left:303px;top:166px;">S<u>e</u>leção cliente...</div>
<div class="t d" style="letter-spacing:0.44px;right:1722.56px;top:134px;">011</div>
<div class="t d" style="letter-spacing:0.44px;right:1638.56px;top:134px;">011</div>
<div class="t d" style="letter-spacing:0.382px;left:124.5px;top:150px;">10/10/2025</div>
<div class="t d" style="letter-spacing:0.382px;left:208.5px;top:150px;">20/10/2025</div>
<div class="t d" style="letter-spacing:0.417px;left:125px;top:182px;">2970</div>
<div class="t d" style="letter-spacing:-0.391px;left:413px;top:134px;">11</div>
<div class="t b" style="color:#fff;letter-spacing:-0.397px;left:1869.5px;top:150px;">Gravar</div>
<div class="t b" style="color:#fff;letter-spacing:-0.237px;left:1868.5px;top:166px;">Limpar</div>
<div class="t b" style="color:#fff;letter-spacing:-0.237px;left:1868.5px;top:182px;">Limpar</div>
<div class="t" style="letter-spacing:-0.09px;left:145px;top:213px;">Todos</div>
<div class="t" style="letter-spacing:0.059px;left:257.5px;top:213px;">Atrasados</div>
<div class="t" style="letter-spacing:-0.142px;left:397px;top:213px;">Próximo de atraso</div>
<div class="t b" style="letter-spacing:0.203px;left:5.5px;top:245px;">Lista</div>
<div class="t b" style="letter-spacing:-0.062px;left:32.5px;top:264px;">Documento<span class="ar">↓↑</span></div>
<div class="t b" style="letter-spacing:-0.278px;left:389px;top:264px;">Código<span class="ar">↓↑</span></div>
<div class="t b" style="letter-spacing:-0.198px;left:449px;top:264px;">Cliente<span class="ar">↓↑</span></div>
<div class="t b" style="letter-spacing:-0.337px;left:750px;top:264px;">Situação<span class="ar">↓↑</span></div>
<div class="t b" style="letter-spacing:-0.456px;left:862.5px;top:264px;">Estágio<span class="ar">↓↑</span></div>
<div class="t b" style="letter-spacing:-0.325px;left:1023.5px;top:264px;">Dt. criação<span class="ar">↓↑</span></div>
<div class="t b" style="letter-spacing:-0.116px;left:1100px;top:264px;">Prev. entrega<span class="ar">↓↑</span></div>
<div class="t b" style="letter-spacing:-0.089px;left:1218.5px;top:264px;">Dias em andamento<span class="ar">↓↑</span></div>
<div class="t b" style="letter-spacing:0.024px;left:1345.5px;top:264px;">Dt. faturado<span class="ar">↓↑</span></div>
<div class="t b" style="letter-spacing:-0.237px;left:1437px;top:264px;">Qt. solicitada<span class="ar">↓↑</span></div>
<div class="t b" style="letter-spacing:-0.031px;left:1539px;top:264px;">Qt. faturado<span class="ar">↓↑</span></div>
<div class="t b" style="letter-spacing:-0.262px;left:1625px;top:264px;">Qt. cancelado<span class="ar">↓↑</span></div>
<div class="t b" style="letter-spacing:-0.021px;left:1730px;top:264px;">Qt. pendente<span class="ar">↓↑</span></div>
<div class="t b" style="letter-spacing:-0.089px;left:1831.5px;top:264px;">Total liquído<span class="ar">↓↑</span></div>
<div class="t d" style="letter-spacing:0.469px;left:861px;top:283px;">Total</div>
<div class="t d" style="right:402px;top:283px;">3</div>
<div class="t d" style="right:304px;top:283px;">3</div>
<div class="t d" style="right:108px;top:283px;">0</div>
<div class="t d" style="letter-spacing:0.44px;right:9.559999999999945px;top:283px;">164,70</div>
<div class="t d" style="letter-spacing:-0.062px;word-spacing:1.0px;left:31.5px;top:307px;">PEDIDO PRATELEIRA: 11 - 2970</div>
<div class="t d" style="letter-spacing:0.44px;right:1479.56px;top:307px;">31159</div>
<div class="t d" style="letter-spacing:0.035px;word-spacing:1.0px;left:448px;top:307px;white-space:pre;">LOJA 11 - EMPRESA DO DADDES</div>
<div class="t" style="letter-spacing:-0.134px;left:749px;top:311px;">Atendida</div>
<div class="t d" style="letter-spacing:-0.023px;word-spacing:1.0px;left:861px;top:307px;">PEDIDO FATURADO</div>
<div class="t d" style="letter-spacing:0.438px;left:1022px;top:307px;">15/10/2025</div>
<div class="t d" style="letter-spacing:0.382px;left:1099.5px;top:307px;">15/10/2025</div>
<div class="t d" style="letter-spacing:0.438px;left:1344px;top:307px;">10/10/2025</div>
<div class="t d" style="right:402px;top:307px;">3</div>
<div class="t d" style="right:304px;top:307px;">3</div>
<div class="t d" style="right:206px;top:307px;">0</div>
<div class="t d" style="right:108px;top:307px;">0</div>
<div class="t d" style="letter-spacing:0.44px;right:9.559999999999945px;top:307px;">164,70</div>
<div class="t d" style="color:#4caf50;letter-spacing:-0.156px;word-spacing:1.0px;left:35px;top:331px;">. PEDIDO DE VENDA: 3 - 9467</div>
<div class="t d" style="color:#4caf50;letter-spacing:0.44px;right:1479.56px;top:331px;">31159</div>
<div class="t d" style="color:#4caf50;letter-spacing:0.035px;word-spacing:1.0px;left:448px;top:331px;white-space:pre;">LOJA 11 - EMPRESA DO DADDES</div>
<div class="t" style="color:#4caf50;letter-spacing:-0.134px;left:749px;top:335px;">Atendido</div>
<div class="t d" style="color:#4caf50;letter-spacing:-0.023px;word-spacing:1.0px;left:861px;top:331px;">PEDIDO FATURADO</div>
<div class="t d" style="color:#4caf50;letter-spacing:0.438px;left:1022px;top:331px;">15/10/2025</div>
<div class="t d" style="color:#4caf50;letter-spacing:0.382px;left:1099.5px;top:331px;">15/10/2025</div>
<div class="t d" style="color:#4caf50;letter-spacing:0.438px;left:1344px;top:331px;">20/08/2025</div>
<div class="t d" style="color:#4caf50;right:402px;top:331px;">1</div>
<div class="t d" style="color:#4caf50;right:304px;top:331px;">1</div>
<div class="t d" style="color:#4caf50;right:206px;top:331px;">0</div>
<div class="t d" style="color:#4caf50;right:108px;top:331px;">0</div>
<div class="t d" style="color:#4caf50;letter-spacing:0.44px;right:9.559999999999945px;top:331px;">70,00</div>
<div class="t d" style="color:#4caf50;letter-spacing:0.124px;word-spacing:1.0px;left:35px;top:355px;">. . TRANSACAO DE FATURAMENTO: 3 - 20/08/2025 - 178794</div>
<div class="t d" style="color:#4caf50;letter-spacing:0.44px;right:1479.56px;top:355px;">31159</div>
<div class="t d" style="color:#4caf50;letter-spacing:0.035px;word-spacing:1.0px;left:448px;top:355px;white-space:pre;">LOJA 11 - EMPRESA DO DADDES</div>
<div class="t" style="color:#4caf50;letter-spacing:-0.134px;left:749px;top:359px;">Atendida</div>
<div class="t d" style="color:#4caf50;letter-spacing:-0.023px;word-spacing:1.0px;left:861px;top:355px;">PEDIDO FATURADO</div>
<div class="t d" style="color:#4caf50;letter-spacing:0.438px;left:1022px;top:355px;">15/10/2025</div>
<div class="t d" style="color:#4caf50;letter-spacing:0.382px;left:1099.5px;top:355px;">15/10/2025</div>
<div class="t d" style="color:#4caf50;letter-spacing:0.438px;left:1344px;top:355px;">20/08/2025</div>
<div class="t d" style="color:#4caf50;right:402px;top:355px;">1</div>
<div class="t d" style="color:#4caf50;right:304px;top:355px;">1</div>
<div class="t d" style="color:#4caf50;right:206px;top:355px;">0</div>
<div class="t d" style="color:#4caf50;right:108px;top:355px;">0</div>
<div class="t d" style="color:#4caf50;letter-spacing:0.44px;right:9.559999999999945px;top:355px;">70,00</div>
<div class="t d" style="color:#4caf50;letter-spacing:0.009px;word-spacing:1.0px;left:37.5px;top:379px;">...PEDIDO DE VENDA TRIANGULAR: 11 - 2972</div>
<div class="t d" style="color:#4caf50;letter-spacing:0.44px;right:1479.56px;top:379px;">100000017</div>
<div class="t d" style="color:#4caf50;letter-spacing:0.021px;word-spacing:1.0px;left:448px;top:379px;white-space:pre;">LOJA 03 - SERVICOS TECNOLOGICOS LTDA   LO</div>
<div class="t" style="color:#4caf50;letter-spacing:-0.134px;left:749px;top:383px;">Atendido</div>
<div class="t d" style="color:#4caf50;letter-spacing:-0.023px;word-spacing:1.0px;left:861px;top:379px;">PEDIDO FATURADO</div>
<div class="t d" style="color:#4caf50;letter-spacing:0.438px;left:1022px;top:379px;">15/10/2025</div>
<div class="t d" style="color:#4caf50;letter-spacing:0.382px;left:1099.5px;top:379px;">15/10/2025</div>
<div class="t d" style="color:#4caf50;letter-spacing:0.438px;left:1344px;top:379px;">15/10/2025</div>
<div class="t d" style="color:#4caf50;right:402px;top:379px;">1</div>
<div class="t d" style="color:#4caf50;right:304px;top:379px;">1</div>
<div class="t d" style="color:#4caf50;right:206px;top:379px;">0</div>
<div class="t d" style="color:#4caf50;right:108px;top:379px;">0</div>
<div class="t d" style="color:#4caf50;letter-spacing:0.44px;right:9.559999999999945px;top:379px;">70,00</div>
<div class="t d" style="color:#4caf50;letter-spacing:0.224px;word-spacing:1.0px;left:37.5px;top:403px;">...TRANSACAO TRIANGULAR: 11 - 15/10/2025 - 178796</div>
<div class="t d" style="color:#4caf50;letter-spacing:0.44px;right:1479.56px;top:403px;">100000017</div>
<div class="t d" style="color:#4caf50;letter-spacing:0.021px;word-spacing:1.0px;left:448px;top:403px;white-space:pre;">LOJA 03 - SERVICOS TECNOLOGICOS LTDA   LO</div>
<div class="t" style="color:#4caf50;letter-spacing:-0.134px;left:749px;top:407px;">Atendida</div>
<div class="t d" style="color:#4caf50;letter-spacing:-0.023px;word-spacing:1.0px;left:861px;top:403px;">PEDIDO FATURADO</div>
<div class="t d" style="color:#4caf50;letter-spacing:0.438px;left:1022px;top:403px;">15/10/2025</div>
<div class="t d" style="color:#4caf50;letter-spacing:0.382px;left:1099.5px;top:403px;">15/10/2025</div>
<div class="t d" style="color:#4caf50;letter-spacing:0.438px;left:1344px;top:403px;">15/10/2025</div>
<div class="t d" style="color:#4caf50;right:402px;top:403px;">1</div>
<div class="t d" style="color:#4caf50;right:304px;top:403px;">1</div>
<div class="t d" style="color:#4caf50;right:206px;top:403px;">0</div>
<div class="t d" style="color:#4caf50;right:108px;top:403px;">0</div>
<div class="t d" style="color:#4caf50;letter-spacing:0.44px;right:9.559999999999945px;top:403px;">70,00</div>
<div class="t d" style="color:#4caf50;letter-spacing:-0.156px;word-spacing:1.0px;left:35px;top:427px;">. PEDIDO DE VENDA: 8 - 3804</div>
<div class="t d" style="color:#4caf50;letter-spacing:0.44px;right:1479.56px;top:427px;">31159</div>
<div class="t d" style="color:#4caf50;letter-spacing:0.035px;word-spacing:1.0px;left:448px;top:427px;white-space:pre;">LOJA 11 - EMPRESA DO DADDES</div>
<div class="t" style="color:#4caf50;letter-spacing:-0.134px;left:749px;top:431px;">Atendido</div>
<div class="t d" style="color:#4caf50;letter-spacing:-0.023px;word-spacing:1.0px;left:861px;top:427px;">PEDIDO FATURADO</div>
<div class="t d" style="color:#4caf50;letter-spacing:0.438px;left:1022px;top:427px;">15/10/2025</div>
<div class="t d" style="color:#4caf50;letter-spacing:0.382px;left:1099.5px;top:427px;">15/10/2025</div>
<div class="t d" style="color:#4caf50;letter-spacing:0.438px;left:1344px;top:427px;">10/10/2025</div>
<div class="t d" style="color:#4caf50;right:402px;top:427px;">2</div>
<div class="t d" style="color:#4caf50;right:304px;top:427px;">2</div>
<div class="t d" style="color:#4caf50;right:206px;top:427px;">0</div>
<div class="t d" style="color:#4caf50;right:108px;top:427px;">0</div>
<div class="t d" style="color:#4caf50;letter-spacing:0.44px;right:9.559999999999945px;top:427px;">140,00</div>
<div class="t d" style="color:#4caf50;letter-spacing:0.124px;word-spacing:1.0px;left:35px;top:451px;">. . TRANSACAO DE FATURAMENTO: 8 - 10/10/2025 - 178793</div>
<div class="t d" style="color:#4caf50;letter-spacing:0.44px;right:1479.56px;top:451px;">31159</div>
<div class="t d" style="color:#4caf50;letter-spacing:0.035px;word-spacing:1.0px;left:448px;top:451px;white-space:pre;">LOJA 11 - EMPRESA DO DADDES</div>
<div class="t" style="color:#4caf50;letter-spacing:-0.134px;left:749px;top:455px;">Atendida</div>
<div class="t d" style="color:#4caf50;letter-spacing:-0.023px;word-spacing:1.0px;left:861px;top:451px;">PEDIDO FATURADO</div>
<div class="t d" style="color:#4caf50;letter-spacing:0.438px;left:1022px;top:451px;">15/10/2025</div>
<div class="t d" style="color:#4caf50;letter-spacing:0.382px;left:1099.5px;top:451px;">15/10/2025</div>
<div class="t d" style="color:#4caf50;letter-spacing:0.438px;left:1344px;top:451px;">10/10/2025</div>
<div class="t d" style="color:#4caf50;right:402px;top:451px;">2</div>
<div class="t d" style="color:#4caf50;right:304px;top:451px;">2</div>
<div class="t d" style="color:#4caf50;right:206px;top:451px;">0</div>
<div class="t d" style="color:#4caf50;right:108px;top:451px;">0</div>
<div class="t d" style="color:#4caf50;letter-spacing:0.44px;right:9.559999999999945px;top:451px;">140,00</div>
<div class="t d" style="color:#4caf50;letter-spacing:0.009px;word-spacing:1.0px;left:37.5px;top:475px;">...PEDIDO DE VENDA TRIANGULAR: 11 - 2971</div>
<div class="t d" style="color:#4caf50;letter-spacing:0.44px;right:1479.56px;top:475px;">10000007</div>
<div class="t d" style="color:#4caf50;letter-spacing:0.199px;word-spacing:1.0px;left:448px;top:475px;white-space:pre;">LOJA 08 - CARDOSO</div>
<div class="t" style="color:#4caf50;letter-spacing:-0.134px;left:749px;top:479px;">Atendido</div>
<div class="t d" style="color:#4caf50;letter-spacing:-0.023px;word-spacing:1.0px;left:861px;top:475px;">PEDIDO FATURADO</div>
<div class="t d" style="color:#4caf50;letter-spacing:0.438px;left:1022px;top:475px;">15/10/2025</div>
<div class="t d" style="color:#4caf50;letter-spacing:0.382px;left:1099.5px;top:475px;">15/10/2025</div>
<div class="t d" style="color:#4caf50;letter-spacing:0.438px;left:1344px;top:475px;">15/10/2025</div>
<div class="t d" style="color:#4caf50;right:402px;top:475px;">2</div>
<div class="t d" style="color:#4caf50;right:304px;top:475px;">2</div>
<div class="t d" style="color:#4caf50;right:206px;top:475px;">0</div>
<div class="t d" style="color:#4caf50;right:108px;top:475px;">0</div>
<div class="t d" style="color:#4caf50;letter-spacing:0.44px;right:9.559999999999945px;top:475px;">140,00</div>
<div class="t d" style="color:#4caf50;letter-spacing:0.224px;word-spacing:1.0px;left:37.5px;top:499px;">...TRANSACAO TRIANGULAR: 11 - 15/10/2025 - 178795</div>
<div class="t d" style="color:#4caf50;letter-spacing:0.44px;right:1479.56px;top:499px;">10000007</div>
<div class="t d" style="color:#4caf50;letter-spacing:0.199px;word-spacing:1.0px;left:448px;top:499px;white-space:pre;">LOJA 08 - CARDOSO</div>
<div class="t" style="color:#4caf50;letter-spacing:-0.134px;left:749px;top:503px;">Atendida</div>
<div class="t d" style="color:#4caf50;letter-spacing:-0.023px;word-spacing:1.0px;left:861px;top:499px;">PEDIDO FATURADO</div>
<div class="t d" style="color:#4caf50;letter-spacing:0.438px;left:1022px;top:499px;">15/10/2025</div>
<div class="t d" style="color:#4caf50;letter-spacing:0.382px;left:1099.5px;top:499px;">15/10/2025</div>
<div class="t d" style="color:#4caf50;letter-spacing:0.438px;left:1344px;top:499px;">15/10/2025</div>
<div class="t d" style="color:#4caf50;right:402px;top:499px;">2</div>
<div class="t d" style="color:#4caf50;right:304px;top:499px;">2</div>
<div class="t d" style="color:#4caf50;right:206px;top:499px;">0</div>
<div class="t d" style="color:#4caf50;right:108px;top:499px;">0</div>
<div class="t d" style="color:#4caf50;letter-spacing:0.44px;right:9.559999999999945px;top:499px;">140,00</div>
<div class="t tab" style="color:#fff;letter-spacing:0.32px;left:15.5px;top:817px;">Produto documento</div>
<div class="t tab" style="color:#12a0c0;letter-spacing:0.133px;left:139.5px;top:817px;">Grupo</div>
<div class="t tab" style="color:#12a0c0;letter-spacing:0.059px;left:190px;top:817px;">Origem</div>
<div class="t tab" style="color:#12a0c0;letter-spacing:0.083px;left:246.5px;top:817px;">Destino</div>
<div class="t tab" style="color:#12a0c0;letter-spacing:0.14px;left:304.5px;top:817px;">Destino/Estágio</div>
<div class="t tab" style="color:#12a0c0;letter-spacing:0.13px;left:405.5px;top:817px;">Destino/Estágio/Situação</div>
<div class="t tab" style="color:#12a0c0;letter-spacing:0.052px;left:555px;top:817px;">Classificação produto</div>
<div class="t b" style="letter-spacing:-0.078px;left:13px;top:845px;">Código<span class="ar">↓↑</span></div>
<div class="t b" style="letter-spacing:-0.029px;left:111.5px;top:845px;">Produto<span class="ar">↓↑</span></div>
<div class="t b" style="letter-spacing:0.025px;left:1328px;top:845px;">Qt. de pedido gerado<span class="ar">↓↑</span></div>
<div class="t b" style="letter-spacing:-0.211px;left:1459px;top:845px;">Qt solicitada<span class="ar">↓↑</span></div>
<div class="t b" style="letter-spacing:-0.021px;left:1545px;top:845px;">Qt. faturada<span class="ar">↓↑</span></div>
<div class="t b" style="letter-spacing:-0.296px;left:1630px;top:845px;">Qt. cancelada<span class="ar">↓↑</span></div>
<div class="t b" style="letter-spacing:-0.021px;left:1721px;top:845px;">Qt. pendente<span class="ar">↓↑</span></div>
<div class="t b" style="letter-spacing:-0.089px;left:1829.5px;top:845px;">Total liquido<span class="ar">↓↑</span></div>
<div class="t d" style="letter-spacing:0.469px;left:110.5px;top:864px;">Total</div>
<div class="t d" style="right:467px;top:864px;">2</div>
<div class="t d" style="right:383px;top:864px;">3</div>
<div class="t d" style="right:299px;top:864px;">3</div>
<div class="t d" style="right:208px;top:864px;">0</div>
<div class="t d" style="right:117px;top:864px;">0</div>
<div class="t d" style="letter-spacing:0.44px;right:11.559999999999945px;top:864px;">164,70</div>
<div class="t d" style="right:467px;top:883px;">2</div>
<div class="t d" style="right:383px;top:883px;">3</div>
<div class="t d" style="right:299px;top:883px;">3</div>
<div class="t d" style="right:208px;top:883px;">0</div>
<div class="t d" style="right:117px;top:883px;">0</div>
<div class="t d" style="letter-spacing:0.44px;right:11.559999999999945px;top:883px;">164,70</div>
<div class="t d" style="letter-spacing:0.225px;left:13px;top:883px;">124274</div>
<div class="t d" style="letter-spacing:-0.012px;word-spacing:1.0px;left:110.5px;top:883px;">FRAUDA PAMPERS CONFORT SEC DIVERSAS 38</div></body></html>
